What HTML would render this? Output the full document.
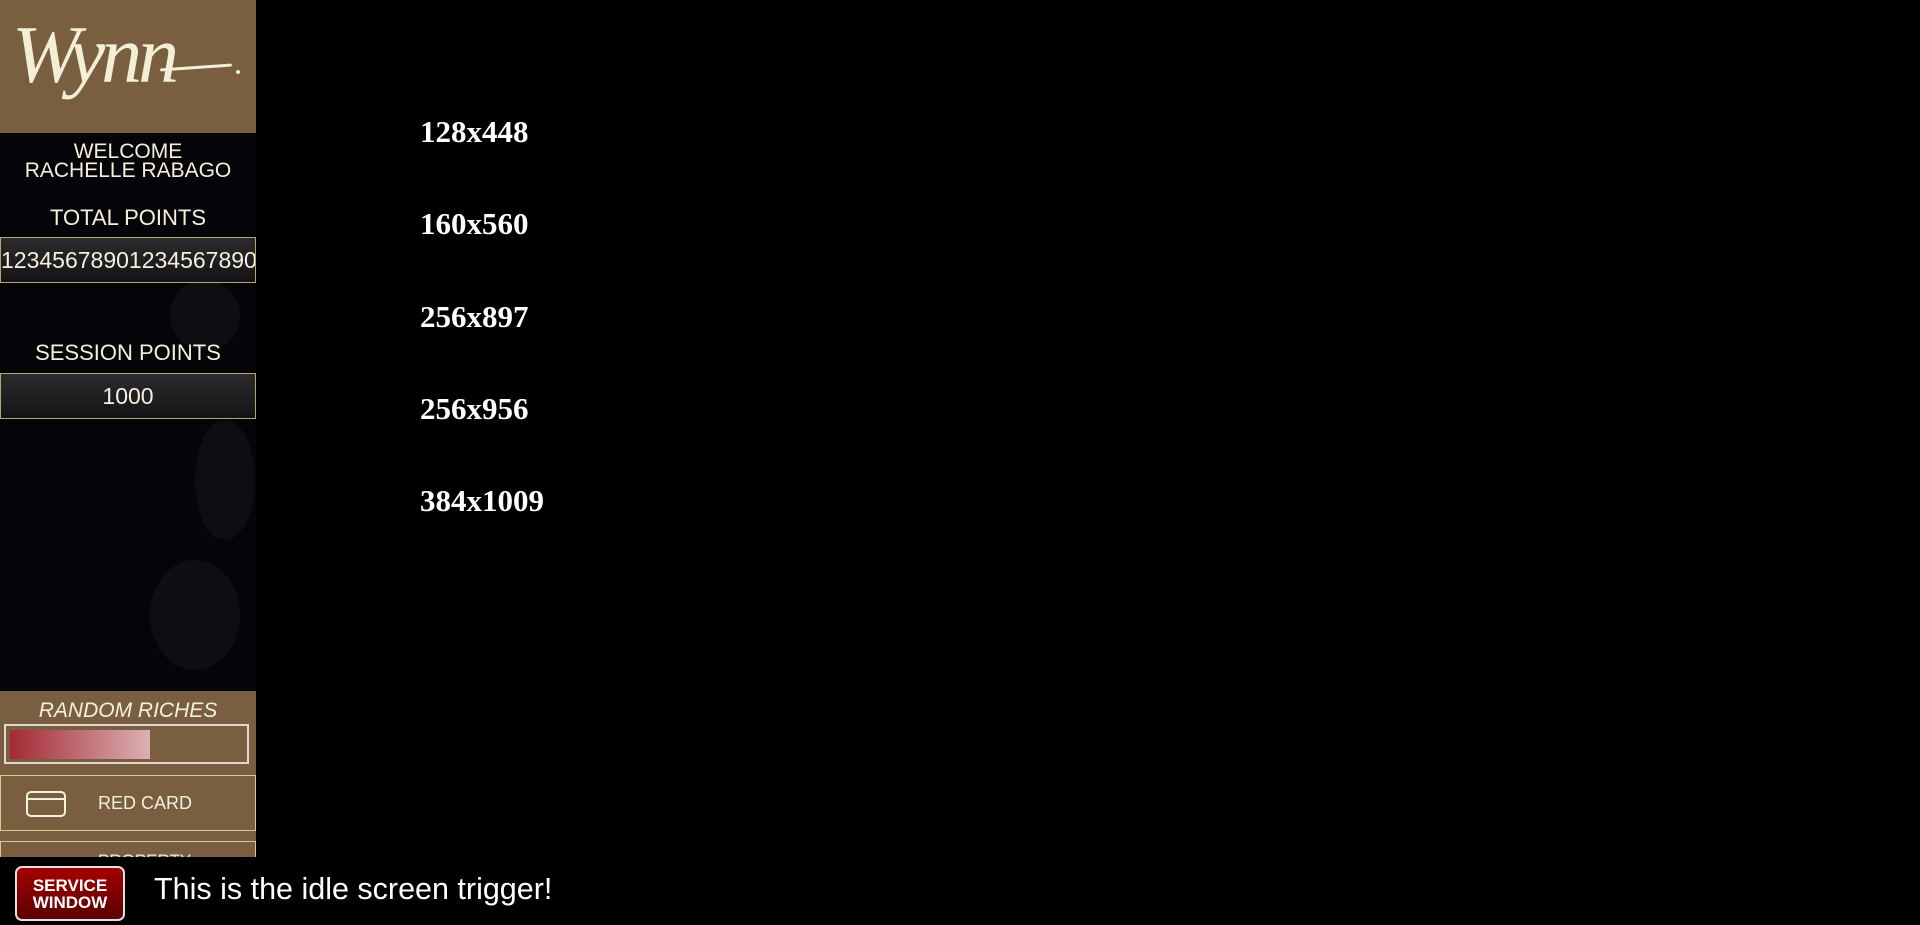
<!DOCTYPE html>
<html><head><meta charset="utf-8"><style>
*{margin:0;padding:0;box-sizing:border-box}
body{width:1920px;height:925px;background:#000;position:relative;overflow:hidden;font-family:"Liberation Sans",sans-serif}
.side{position:absolute;left:0;top:0;width:256px;height:857px;background:#050509;overflow:hidden}
.logo{position:absolute;left:0;top:0;width:256px;height:133px;background:#7a5e40}
.logo span{position:absolute;left:12px;top:8px;font-family:"Liberation Serif",serif;font-style:italic;font-size:82px;color:#f3eed6;letter-spacing:-4px}
.logo i{position:absolute;left:160px;top:66px;width:72px;height:3px;background:#f3eed6;border-radius:2px;transform:rotate(-4deg)}
.logo b{position:absolute;left:236px;top:70px;width:4px;height:4px;background:#f3eed6;border-radius:50%}
.c{position:absolute;left:0;width:256px;text-align:center;color:#f4f0dc}
.box{position:absolute;left:0;width:256px;height:46px;border:1px solid #b9a56a;background:linear-gradient(#2b2b2e,#141416);color:#f4f0dc;font-size:23px;line-height:44px;text-align:center;white-space:nowrap;overflow:hidden}
.flo{position:absolute;border-radius:50%;background:#0e0e12}
.brown{position:absolute;left:0;top:691px;width:256px;height:192px;background:#7a5e40}
.btn{position:absolute;left:0;width:256px;border:1px solid #d8c98e;background:#7a5e40;color:#f4f0dc;font-size:18px}
</style></head><body>
<div class="side">
 <div class="flo" style="left:170px;top:280px;width:70px;height:70px"></div>
 <div class="flo" style="left:195px;top:420px;width:60px;height:120px"></div>
 <div class="flo" style="left:150px;top:560px;width:90px;height:110px"></div>
 <div class="logo"><span>Wynn</span><i></i><b></b></div>
 <div class="c" style="top:142px;font-size:21px;line-height:19px">WELCOME<br>RACHELLE RABAGO</div>
 <div class="c" style="top:204px;font-size:22px;line-height:28px">TOTAL POINTS</div>
 <div class="box" style="top:237px;text-align:left">12345678901234567890123</div>
 <div class="c" style="top:339px;font-size:22px;line-height:28px">SESSION POINTS</div>
 <div class="box" style="top:373px">1000</div>
 <div class="brown"></div>
 <div class="c" style="top:698px;font-size:21px;font-style:italic;line-height:26px">RANDOM RICHES</div>
 <div style="position:absolute;left:4px;top:724px;width:245px;height:40px;border:2px solid #e8d5d5"></div>
 <div style="position:absolute;left:10px;top:730px;width:140px;height:29px;background:linear-gradient(90deg,#a32a35,#dcb0b2)"></div>
 <div class="btn" style="top:775px;height:56px">
  <div style="position:absolute;left:25px;top:15px;width:40px;height:26px;border:2px solid #f4f0dc;border-radius:5px"><div style="position:absolute;left:0;right:0;top:5px;height:2px;background:#f4f0dc"></div></div>
  <div style="position:absolute;left:97px;top:17px">RED CARD</div>
 </div>
 <div class="btn" style="top:841px;height:60px"><div style="position:absolute;left:97px;top:9px;font-size:17px">PROPERTY</div></div>
</div>
<div style="position:absolute;left:15px;top:866px;width:110px;height:55px;border:2px solid #e9dede;border-radius:7px;background:linear-gradient(#a40000,#5a0000);color:#fff;font-weight:bold;font-size:17px;line-height:17px;text-align:center;padding-top:9px">SERVICE<br>WINDOW</div>
<div style="position:absolute;left:154px;top:871px;color:#fff;font-size:30.5px;line-height:36px">This is the idle screen trigger!</div>
<div style="position:absolute;left:420px;top:114px;color:#fff;font-family:'Liberation Serif',serif;font-weight:bold;font-size:31px;line-height:36px">
<div style="height:92px">128x448</div><div style="height:93px">160x560</div><div style="height:92px">256x897</div><div style="height:92px">256x956</div><div>384x1009</div></div>
</body></html>
